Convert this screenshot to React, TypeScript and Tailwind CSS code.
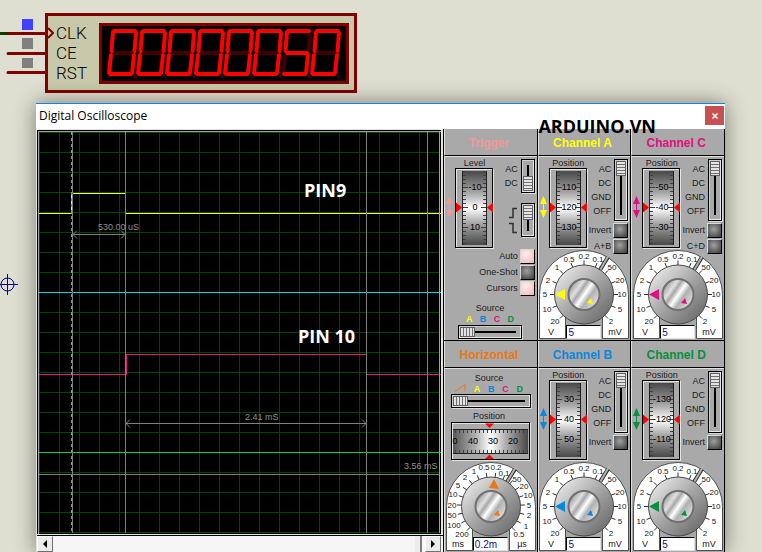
import React from "react";

type Segment = "a" | "b" | "c" | "d" | "e" | "f" | "g";

const SEGMENTS: Record<Segment, string> = {
  a: "M9 5H30",
  b: "M31 7L29.5 25",
  c: "M29 29L27 47",
  d: "M5 48H26",
  e: "M6 29L4 47",
  f: "M8 6L6.5 25",
  g: "M8 27H28",
};

const DIGITS: Record<string, Segment[]> = {
  "0": ["a", "b", "c", "d", "e", "f"],
  "5": ["a", "c", "d", "f", "g"],
};

function SevenSegment({ value }: { value: string }) {
  return (
    <svg viewBox="0 0 244 55" className="block h-[55px] w-[244px] bg-black" role="img" aria-label={value}>
      {value.split("").map((digit, i) => {
        const lit = DIGITS[digit];
        const all = Object.keys(SEGMENTS) as Segment[];
        return (
          <g key={i} transform={`translate(${i * 29 + 3} 0)`} strokeWidth="4" strokeLinecap="round" fill="none">
            {all.filter((s) => !lit.includes(s)).map((s) => (
              <path key={s} d={SEGMENTS[s]} stroke="#400000" strokeLinecap="butt" />
            ))}
            {lit.map((s) => (
              <path key={s} d={SEGMENTS[s]} stroke="#ff0000" />
            ))}
            <rect x="29" y="49" width="3" height="3" fill="#400000" stroke="none" />
          </g>
        );
      })}
    </svg>
  );
}

function CounterPins() {
  return (
    <svg viewBox="0 0 45 103" className="block h-[103px] w-[45px] shrink-0" aria-hidden="true">
      <path d="M0 33.5H8" stroke="#004000" strokeWidth="3" />
      <path d="M8 33.5H45M8 53.5H45M8 72.5H45" stroke="#800000" strokeWidth="3" strokeLinecap="round" />
      <rect x="22" y="19" width="11" height="11" fill="#4040ff" />
      <rect x="22" y="38" width="11" height="11" fill="#808080" />
      <rect x="22" y="58" width="11" height="10" fill="#808080" />
    </svg>
  );
}

function Counter() {
  return (
    <section className="flex h-[103px] items-start">
      <CounterPins />
      <div className="mt-[13px] flex h-20 w-[312px] border-[3px] border-[#800000] bg-[#c8c8aa]">
        <svg viewBox="0 0 6 20" className="mt-[7px] h-5 w-1.5 shrink-0" aria-hidden="true">
          <path d="M0 5L5 10L0 15" stroke="#800000" strokeWidth="2" fill="none" />
        </svg>
        <ul className="mt-[7px] w-[45px] shrink-0 pl-0.5 font-['Roboto',sans-serif] text-[17px] leading-[20px] font-light text-black">
          <li>CLK</li>
          <li>CE</li>
          <li>RST</li>
        </ul>
        <div className="mt-[7px] h-[61px] border-[3px] border-[#800000]">
          <SevenSegment value="00000050" />
        </div>
      </div>
    </section>
  );
}

const GRID = Array.from({ length: 21 }, (_, i) => i * 20 + 0.5);

function ScopePlot() {
  return (
    <svg viewBox="0 0 402 402" className="block h-auto w-full bg-black" role="img" aria-label="Waveforms">
      <g stroke="#004800" strokeWidth="1">
        {GRID.map((p) => (
          <path key={p} d={`M${p} 0V401M0 ${p}H401`} />
        ))}
      </g>
      <g fill="none" strokeWidth="1">
        <path d="M0 81.5H32.5V61.5H86.5M86.5 81.5H402" stroke="#ffff00" />
        <path d="M0 160.5H402" stroke="#00d8e8" />
        <path d="M0 242.5H87.5V222.5H327.5M327.5 242.5H402" stroke="#f01880" />
        <path d="M0 320.5H402" stroke="#00d848" />
        <path d="M33.5 0V401M86.5 0V401M327.5 0V401M388.5 0V401" stroke="#808080" />
        <path d="M32.5 0V401" stroke="#909090" strokeDasharray="3 3" />
        <path d="M34 102.5H86M38 98.5L34 102.5L38 106.5M82 98.5L86 102.5L82 106.5" stroke="#808080" />
        <path d="M87 291.5H327M91 287.5L87 291.5L91 295.5M323 287.5L327 291.5L323 295.5" stroke="#808080" />
        <path d="M0 342.5H400" stroke="#808080" />
        <path d="M400.5 0V401" stroke="#a0a0a0" />
      </g>
      <g className="font-['Liberation_Sans',Arial,sans-serif] text-[9px]" fill="#909090">
        <text x="59" y="98">530.00 uS</text>
        <text x="206" y="288">2.41 mS</text>
        <text x="365" y="337">3.56 mS</text>
      </g>
      <g className="font-['Open_Sans','Noto_Sans',sans-serif] text-[18px] font-bold" fill="#ffffff">
        <text x="265" y="65">PIN9</text>
        <text x="259" y="211">PIN 10</text>
      </g>
    </svg>
  );
}

function ScrollButton({ label, path }: { label: string; path: string }) {
  return (
    <button
      type="button"
      aria-label={label}
      className="flex h-4 w-4 shrink-0 items-center justify-center border border-t-white border-r-[#707070] border-b-[#707070] border-l-white bg-[#ececec]"
    >
      <svg viewBox="0 0 8 8" className="h-2 w-2" aria-hidden="true">
        <path d={path} fill="#000" />
      </svg>
    </button>
  );
}

function Scope() {
  return (
    <div className="flex min-w-0 flex-1 flex-col bg-[#e4e4e4] pt-px pl-px">
      <div className="mr-0.5 border-t border-l border-black">
        <div className="border-t border-l border-[#a0a0a0]">
          <ScopePlot />
        </div>
      </div>
      <div className="mt-px flex h-[18px] border-t border-black bg-[#f6f6f6]">
        <ScrollButton label="Scroll left" path="M6 0V8L2 4Z" />
        <div className="flex flex-1 justify-end pr-[3px]">
          <div className="h-4 w-[7px] border-r-2 border-[#808080] bg-[#ececec]" />
        </div>
        <ScrollButton label="Scroll right" path="M2 0V8L6 4Z" />
        <div className="w-0.5" />
      </div>
    </div>
  );
}

function VerticalSlider({ label, max, value, tall }: { label: string; max: number; value: number; tall?: boolean }) {
  return (
    <div
      className={`flex w-[14px] shrink-0 justify-center border border-black p-px shadow-[inset_-1px_-1px_0_#e8e8e8,inset_1px_1px_0_#d0d0d0,1px_1px_0_#d8d8d8] ${
        tall ? "h-[62px]" : "h-[34px]"
      }`}
    >
      <input
        type="range"
        aria-label={label}
        min={0}
        max={max}
        defaultValue={value}
        className="m-0 block h-full w-[10px] appearance-none bg-[linear-gradient(#000,#000)] bg-[length:2px_calc(100%-8px)] bg-center bg-no-repeat [writing-mode:vertical-lr] [&::-webkit-slider-thumb]:h-[15px] [&::-webkit-slider-thumb]:w-[10px] [&::-webkit-slider-thumb]:appearance-none [&::-webkit-slider-thumb]:border [&::-webkit-slider-thumb]:border-[#606060] [&::-webkit-slider-thumb]:bg-[repeating-linear-gradient(#e4e4e4_0_2px,#707070_2px_3px)]"
      />
    </div>
  );
}

function HorizontalSlider({ label, max }: { label: string; max: number }) {
  return (
    <div className="flex h-[14px] w-full items-center border border-black p-px shadow-[inset_-1px_-1px_0_#e8e8e8,inset_1px_1px_0_#d0d0d0,1px_1px_0_#d8d8d8]">
      <input
        type="range"
        aria-label={label}
        min={0}
        max={max}
        defaultValue={0}
        className="m-0 block h-[10px] w-full appearance-none bg-[linear-gradient(#000,#000)] bg-[length:calc(100%-8px)_2px] bg-center bg-no-repeat [&::-webkit-slider-thumb]:h-[10px] [&::-webkit-slider-thumb]:w-[15px] [&::-webkit-slider-thumb]:appearance-none [&::-webkit-slider-thumb]:border [&::-webkit-slider-thumb]:border-[#606060] [&::-webkit-slider-thumb]:bg-[repeating-linear-gradient(90deg,#e4e4e4_0_2px,#707070_2px_3px)]"
      />
    </div>
  );
}

function Toggle({ label, on }: { label: string; on?: boolean }) {
  return (
    <label className="flex h-4 items-center justify-end gap-0.5 leading-[16px] whitespace-nowrap">
      {label}
      <input
        type="checkbox"
        defaultChecked={on}
        className="m-0 h-[15px] w-[15px] shrink-0 appearance-none border border-t-[#d8d8d8] border-r-black border-b-black border-l-[#d8d8d8] bg-[radial-gradient(circle_at_45%_40%,#a0a0a0,#383838)] checked:bg-[radial-gradient(circle_at_40%_35%,#fff0f0,#f4b4b8)]"
      />
    </label>
  );
}

function UpDownArrow({ color }: { color: string }) {
  return (
    <svg viewBox="0 0 7 22" className="h-[22px] w-[7px] shrink-0" aria-hidden="true">
      <path d="M3.5 0L7 8H0ZM3.5 22L7 14H0Z" fill={color} />
      <path d="M3.5 6V16" stroke={color} strokeWidth="1" />
    </svg>
  );
}

function Wheel({ id, values }: { id: string; values: string[] }) {
  const ticks = Array.from({ length: 19 }, (_, i) => 3 + i * 4);
  return (
    <svg viewBox="0 0 39 81" className="block h-[81px] w-[39px]" role="img" aria-label={`${values[1]}`}>
      <defs>
        <linearGradient id={id} x1="0" y1="0" x2="0" y2="1">
          <stop offset="0" stopColor="#484848" />
          <stop offset="0.3" stopColor="#a8a8a8" />
          <stop offset="0.5" stopColor="#ffffff" />
          <stop offset="0.7" stopColor="#a8a8a8" />
          <stop offset="1" stopColor="#484848" />
        </linearGradient>
      </defs>
      <rect x="1.5" y="1.5" width="37" height="79" fill="none" stroke="#e4e4e4" />
      <rect x="0.5" y="0.5" width="37" height="79" fill="none" stroke="#000" />
      <rect x="7" y="3" width="25" height="74" fill={`url(#${id})`} />
      <path d="M7.5 3V77M31.5 3V77" stroke="#202020" strokeWidth="1" />
      <g stroke="#404040" strokeWidth="1">
        {ticks.map((y, i) => {
          const len = i % 5 === 4 ? 5 : 3;
          return <path key={y} d={`M8 ${y + 0.5}h${len}M31 ${y + 0.5}h-${len}`} />;
        })}
      </g>
      <path d="M1 34.5L7 39.5L1 44.5ZM38 34.5L32 39.5L38 44.5Z" fill="#ff0000" />
      <g className="font-['Liberation_Sans',Arial,sans-serif] text-[9px]" textAnchor="middle" fill="#000">
        {values.map((v, i) => (
          <text key={v} x="20" y={22 + i * 20}>
            {v}
          </text>
        ))}
      </g>
    </svg>
  );
}

function HorizontalWheel() {
  const ticks = Array.from({ length: 19 }, (_, i) => 4 + i * 4);
  return (
    <svg viewBox="0 0 80 39" className="block h-[39px] w-20" role="img" aria-label="30">
      <defs>
        <linearGradient id="hwheel">
          <stop offset="0" stopColor="#585858" />
          <stop offset="0.3" stopColor="#b0b0b0" />
          <stop offset="0.5" stopColor="#ffffff" />
          <stop offset="0.7" stopColor="#b0b0b0" />
          <stop offset="1" stopColor="#484848" />
        </linearGradient>
      </defs>
      <rect x="1.5" y="1.5" width="78" height="37" fill="none" stroke="#e4e4e4" />
      <rect x="0.5" y="0.5" width="78" height="37" fill="none" stroke="#000" />
      <rect x="2" y="7" width="75" height="25" fill="url(#hwheel)" />
      <path d="M2 7.5H77M2 31.5H77" stroke="#202020" strokeWidth="1" />
      <g stroke="#404040" strokeWidth="1">
        {ticks.map((x) => (
          <path key={x} d={`M${x + 0.5} 8v3M${x + 0.5} 31v-3`} />
        ))}
      </g>
      <path d="M34 1.5H43L38.5 6ZM34 37H43L38.5 32.5Z" fill="#ff0000" />
      <g className="font-['Liberation_Sans',Arial,sans-serif] text-[9px]" textAnchor="middle" fill="#000">
        <text x="4" y="22">0</text>
        <text x="22" y="22">40</text>
        <text x="42" y="22">30</text>
        <text x="62" y="22">20</text>
      </g>
    </svg>
  );
}

type Mark = [string, number, number];

const VOLT_MARKS: Mark[] = [
  ["20", 16, 71], ["10", 8, 59], ["5", 6, 44], ["2", 9, 30], ["1", 18, 17], ["0.5", 30, 9],
  ["0.2", 45, 6], ["0.1", 59, 9], ["50", 73, 17], ["20", 81, 30], ["10", 83, 44], ["5", 81, 59], ["2", 72, 71],
];

const TIME_MARKS: Mark[] = [
  ["200", 16, 72], ["100", 8, 63], ["50", 6, 53], ["20", 6, 43], ["10", 7, 32], ["5", 12, 23],
  ["2", 19, 15], ["1", 28, 9], ["0.5", 38, 5], ["0.2", 50, 5], ["0.1", 58, 11], ["50", 71, 17],
  ["20", 78, 24], ["10", 82, 33], ["5", 83, 43], ["2", 83, 53], ["1", 80, 64], ["0.5", 73, 72],
];

function Knob(props: {
  id: string;
  name: string;
  color: string;
  marks: Mark[];
  units: [string, string];
  value: string;
  pointer: string;
}) {
  const { id, name, color, marks, units, value, pointer } = props;
  const step = 270 / (marks.length - 1);
  return (
    <div className="relative mx-auto h-[89px] w-[90px]">
      <svg viewBox="0 0 90 89" className="block h-[89px] w-[90px]" aria-hidden="true">
        <defs>
          <linearGradient id={`${id}-o`} x1="0" y1="0" x2="1" y2="1">
            <stop offset="0.1" stopColor="#e8e8e8" />
            <stop offset="0.5" stopColor="#a4a4a4" />
            <stop offset="0.9" stopColor="#6c6c6c" />
          </linearGradient>
          <linearGradient id={`${id}-i`} x1="0" y1="0" x2="1" y2="0.7">
            <stop offset="0.1" stopColor="#8c8c8c" />
            <stop offset="0.35" stopColor="#e0e0e0" />
            <stop offset="0.45" stopColor="#a8a8a8" />
            <stop offset="0.58" stopColor="#ffffff" />
            <stop offset="0.72" stopColor="#b0b0b0" />
            <stop offset="1" stopColor="#e0e0e0" />
          </linearGradient>
        </defs>
        <path
          d="M0.5 88.5V44.5A44.5 44 0 0 1 89.5 44.5V88.5H63.5V60H26.5V88.5Z"
          fill="#fff"
          stroke="#505050"
          strokeWidth="1"
        />
        <path d="M61 20L69 7" stroke="#303030" strokeWidth="4" />
        <path d="M60 22L71 3" stroke="#b0b0b0" strokeWidth="2" />
        <g stroke="#303030" strokeWidth="1">
          {marks.map((_, i) => {
            const a = ((225 - i * step) * Math.PI) / 180;
            const c = Math.cos(a);
            const s = Math.sin(a);
            return <path key={i} d={`M${45 + 29 * c} ${44.5 - 29 * s}L${45 + 34 * c} ${44.5 - 34 * s}`} />;
          })}
        </g>
        <circle cx="45" cy="44.5" r="29.5" fill={`url(#${id}-o)`} stroke="#484848" strokeWidth="1" />
        <circle cx="45" cy="44.5" r="15.5" fill={`url(#${id}-i)`} stroke="#707070" strokeWidth="2" />
        <path d={pointer} fill={color} />
        <path d="M48 53L52 48L54 54Z" fill={color} />
        <g className="font-['Liberation_Sans',Arial,sans-serif] text-[8px]" textAnchor="middle" fill="#202020">
          {marks.map(([t, x, y], i) => (
            <text key={i} x={x} y={y + 3}>
              {t}
            </text>
          ))}
        </g>
        <g className="font-['Liberation_Sans',Arial,sans-serif] text-[9px]" textAnchor="middle" fill="#202020">
          <text x="12" y="85">{units[0]}</text>
          <text x="76" y="85">{units[1]}</text>
        </g>
      </svg>
      <input
        type="text"
        aria-label={`${name} scale`}
        defaultValue={value}
        className="absolute bottom-0 left-[27px] h-[14px] w-[35px] border border-t-black border-r-[#e0e0e0] border-b-[#e0e0e0] border-l-black bg-white px-px text-[10px] leading-[12px] text-[#101080]"
      />
    </div>
  );
}

const LEFT_POINTER = "M16 44.5L26 39V50Z";
const UP_POINTER = "M48 17L43 26L53 27Z";

function Panel({ title, color, children }: { title: string; color: string; children: React.ReactNode }) {
  return (
    <section className="flex flex-col border-l border-black">
      <h2
        className="h-[27px] border-b border-l border-b-black border-l-[#e0e0e0] pr-1 text-center text-[12px] leading-[28px] font-bold"
        style={{ color }}
      >
        {title}
      </h2>
      <div className="h-[184px] border-t border-l border-[#e0e0e0]">{children}</div>
    </section>
  );
}

function ChannelPanel(props: {
  name: string;
  color: string;
  values: string[];
  sum?: string;
}) {
  const { name, color, values, sum } = props;
  return (
    <Panel title={`Channel ${name}`} color={color}>
      <div className="flex h-[93px] pr-0.5 pl-px">
        <div className="w-[9px] pt-[39px]">
          <UpDownArrow color={color} />
        </div>
        <div className="flex w-[39px] flex-col items-center">
          <div className="h-[11px] leading-[12px]">Position</div>
          <Wheel id={`wheel-${name}`} values={values} />
        </div>
        <div className="min-w-0 flex-1 pt-0.5">
          <div className="flex justify-end gap-[3px]">
            <ul className="pt-[3px] text-right leading-[14px]">
              <li>AC</li>
              <li>DC</li>
              <li>GND</li>
              <li>OFF</li>
            </ul>
            <VerticalSlider label={`Channel ${name} coupling`} max={3} value={0} tall />
          </div>
          <div className="pt-px">
            <Toggle label="Invert" />
            {sum && <Toggle label={sum} />}
          </div>
        </div>
      </div>
      <Knob
        id={`knob-${name}`}
        name={`Channel ${name}`}
        color={color}
        marks={VOLT_MARKS}
        units={["V", "mV"]}
        value="5"
        pointer={LEFT_POINTER}
      />
    </Panel>
  );
}

function SourceLetters() {
  return (
    <>
      <span className="text-[#ffff00]">A</span>
      <span className="text-[#0888e0]">B</span>
      <span className="text-[#e01080]">C</span>
      <span className="text-[#089040]">D</span>
    </>
  );
}

function TriggerPanel() {
  return (
    <Panel title="Trigger" color="#f09898">
      <div className="flex h-[146px] pr-0.5 pl-px">
        <div className="w-[9px] pt-[39px]">
          <UpDownArrow color="#f09898" />
        </div>
        <div className="flex w-[39px] flex-col items-center">
          <div className="h-[11px] leading-[12px]">Level</div>
          <Wheel id="wheel-level" values={["-10", "0", "10"]} />
        </div>
        <div className="min-w-0 flex-1 pt-0.5">
          <div className="flex justify-end gap-[3px]">
            <ul className="pt-[3px] text-right leading-[14px]">
              <li>AC</li>
              <li>DC</li>
            </ul>
            <VerticalSlider label="Trigger coupling" max={1} value={1} />
          </div>
          <div className="mt-2.5 flex justify-end gap-1">
            <svg viewBox="0 0 8 34" className="h-[34px] w-2" aria-hidden="true">
              <path d="M0 14.5H4V5.5H8M0 20.5H4V29.5H8" stroke="#303030" strokeWidth="1.5" fill="none" />
            </svg>
            <VerticalSlider label="Trigger edge" max={1} value={0} />
          </div>
          <div className="flex flex-col items-end pt-[11px]">
            <Toggle label="Auto" on />
            <Toggle label="One-Shot" />
            <Toggle label="Cursors" on />
          </div>
        </div>
      </div>
      <div className="ml-[13px] w-16">
        <div className="text-center leading-[10px]">Source</div>
        <div className="flex justify-between px-2 leading-[12px] font-bold">
          <SourceLetters />
        </div>
        <HorizontalSlider label="Trigger source" max={3} />
      </div>
    </Panel>
  );
}

function HorizontalPanel() {
  return (
    <Panel title="Horizontal" color="#e87818">
      <div className="flex h-[93px] flex-col pt-1 pl-1.5">
        <div className="w-20">
          <div className="pr-1 text-center leading-[11px]">Source</div>
          <div className="flex justify-between pr-2 pl-1 leading-[10px] font-bold">
            <svg viewBox="0 0 11 8" className="h-2 w-[11px]" aria-hidden="true">
              <path d="M0 7.5L10 0.5V7.5" stroke="#e87818" fill="none" />
            </svg>
            <SourceLetters />
          </div>
          <HorizontalSlider label="Horizontal source" max={4} />
          <div className="h-[14px] pr-1 text-center leading-[16px]">Position</div>
          <HorizontalWheel />
        </div>
      </div>
      <Knob
        id="knob-time"
        name="Horizontal"
        color="#e87818"
        marks={TIME_MARKS}
        units={["ms", "µs"]}
        value="0.2m"
        pointer={UP_POINTER}
      />
    </Panel>
  );
}

function OscilloscopeWindow() {
  return (
    <main className="relative flex min-w-0 flex-1 flex-col border-t border-[#1883d7] bg-white shadow-[0_0_20px_rgba(0,0,0,0.45)]">
      <header className="flex h-[25px] items-start justify-between pt-0.5 pr-px pl-[3px]">
        <h1 className="font-['Open_Sans','Noto_Sans',sans-serif] text-[12px] leading-[20px] text-black">
          Digital Oscilloscope
        </h1>
        <button
          type="button"
          aria-label="Close"
          className="flex h-[19px] w-[19px] items-center justify-center bg-[#c75050]"
        >
          <svg viewBox="0 0 6 6" className="h-1.5 w-1.5" aria-hidden="true">
            <path d="M0.5 0.5L5.5 5.5M5.5 0.5L0.5 5.5" stroke="#fff" strokeWidth="1.5" />
          </svg>
        </button>
      </header>
      <div className="flex flex-1 items-stretch">
        <Scope />
        <div className="grid w-[282px] shrink-0 grid-cols-3 content-start border-r border-black bg-[#a9a9a9] text-[9px] text-[#202020]">
          <TriggerPanel />
          <ChannelPanel name="A" color="#ffff00" values={["110", "120", "130"]} sum="A+B" />
          <ChannelPanel name="C" color="#e01080" values={["-50", "-40", "-30"]} sum="C+D" />
          <div className="col-span-3 grid grid-cols-3 border-t border-black">
            <HorizontalPanel />
            <ChannelPanel name="B" color="#0888e0" values={["30", "40", "50"]} />
            <ChannelPanel name="D" color="#089040" values={["-130", "-120", "-110"]} />
          </div>
        </div>
      </div>
      <p className="absolute top-[11px] right-[69px] font-['Open_Sans','Noto_Sans',sans-serif] text-[18px] leading-[22px] font-bold text-black">
        ARDUINO.VN
      </p>
    </main>
  );
}

export default function App() {
  return (
    <div className="flex h-screen flex-col overflow-hidden bg-[#dedfd0] font-['Liberation_Sans',Arial,sans-serif]">
      <Counter />
      <div className="flex flex-1 items-stretch">
        <div className="w-9 shrink-0 pt-[171px]">
          <svg viewBox="0 0 18 21" className="h-[21px] w-[18px]" aria-hidden="true">
            <circle cx="7.5" cy="10.5" r="6.5" fill="none" stroke="#0000b0" />
            <path d="M0 10.5H18M7.5 0V21" stroke="#0000b0" />
          </svg>
        </div>
        <OscilloscopeWindow />
        <div className="w-[37px] shrink-0" />
      </div>
    </div>
  );
}
